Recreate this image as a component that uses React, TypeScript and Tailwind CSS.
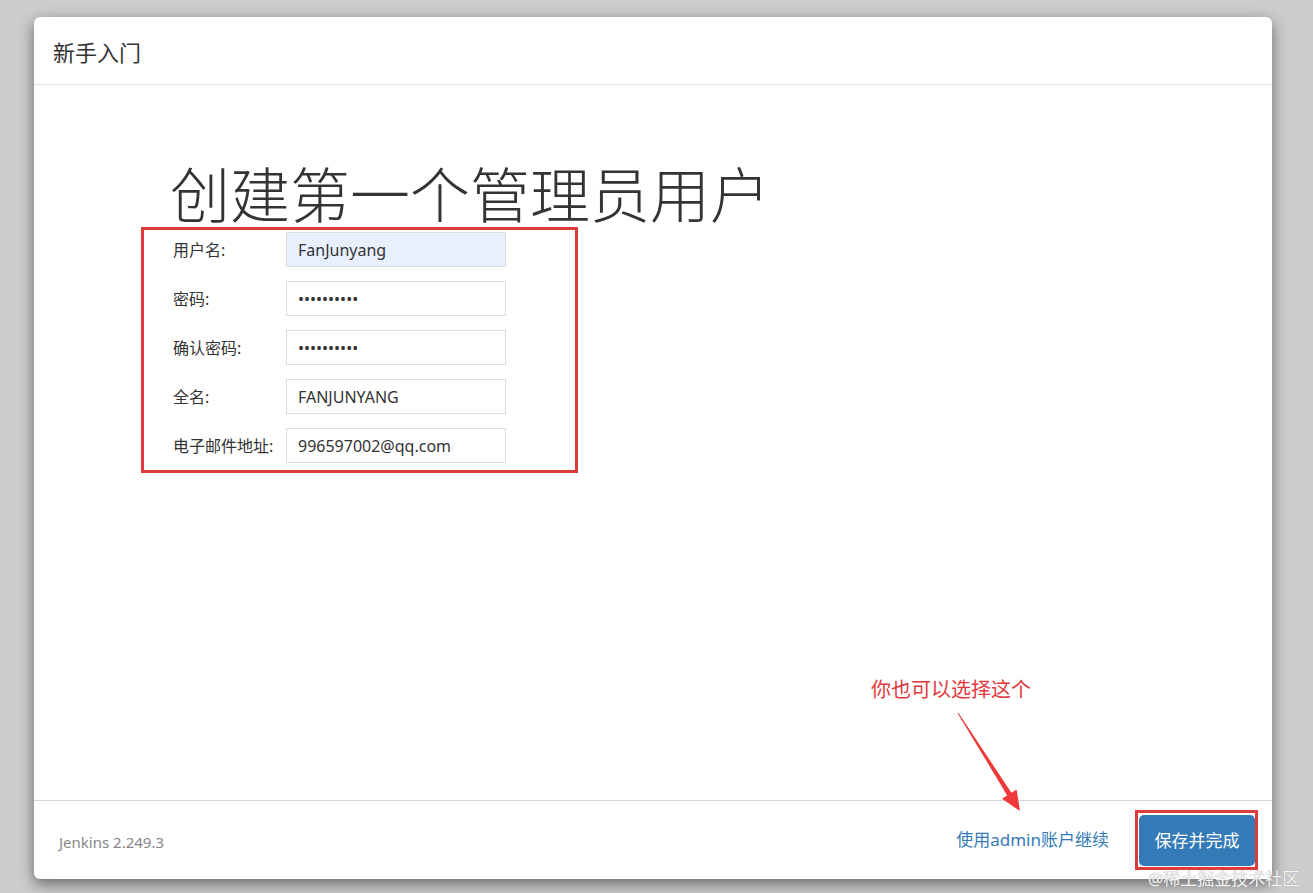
import React from 'react'

const font = '"Noto Sans", "Noto Sans CJK SC", sans-serif'

const fields = [
    { label: '用户名:', value: 'FanJunyang', type: 'text', filled: true },
    { label: '密码:', value: '••••••••••', type: 'password' },
    { label: '确认密码:', value: '••••••••••', type: 'password' },
    { label: '全名:', value: 'FANJUNYANG', type: 'text' },
    { label: '电子邮件地址:', value: '996597002@qq.com', type: 'text' },
]

function Arrow() {
    // red annotation arrow pointing to the admin link
    return (
        <svg className="absolute left-[900px] top-[620px]" width="100" height="112" viewBox="0 0 100 112">
            <polygon
                points="24.4,7.7 77.4,87.8 82.6,84.5 86,106 68,93.7 73.2,90.4 23.6,8.3"
                fill="#f03a3a"
            />
        </svg>
    )
}

export default function App() {
    return (
        <div className="relative min-h-[893px] bg-[#cdcdcd] pt-[17px] pl-[34px] pr-[41px] pb-[14px]" style={{ fontFamily: font }}>
            <div className="flex h-[862px] flex-col rounded-[6px] bg-white shadow-[0_5px_15px_rgba(0,0,0,0.5)]">
                <div className="flex h-[68px] items-center border-b border-[#e5e5e5] pl-[19px] pt-[4px]">
                    <h4 className="text-[22px] text-[#333]">新手入门</h4>
                </div>

                <div className="relative flex-1 pl-[107px] pt-[74px]">
                    <h1 className="pl-[29px] text-[60px] leading-[72px] font-light text-[#333]">创建第一个管理员用户</h1>
                    <div className="-mt-[4px] flex w-[437px] flex-col gap-[14px] border-[3px] border-[#dc3c3c] pl-[29px] pt-[2px] pb-[7px]">
                        {fields.map((f) => (
                            <div key={f.label} className="flex items-center">
                                <label className="w-[113px] text-[16px] text-[#333]">{f.label}</label>
                                <input
                                    readOnly
                                    value={f.value}
                                    className={`h-[35px] w-[220px] border border-[#ddd] px-[11px] text-[16px] text-[#333] outline-none ${f.filled ? 'bg-[#e8f0fe]' : 'bg-white'}`}
                                    style={{ fontFamily: font }}
                                />
                            </div>
                        ))}
                    </div>

                    <div className="absolute left-[837px] top-[590px] text-[20px] text-[#e0393e]">你也可以选择这个</div>
                    <Arrow />
                </div>

                <div className="flex h-[79px] items-center justify-between border-t border-[#d5d5d5] pl-[25px] pr-[14px]">
                    <span className="pt-[5px] text-[15px] text-[#888]">Jenkins 2.249.3</span>
                    <div className="flex items-center gap-[26px]">
                        <a className="text-[17px] text-[#337ab7]">使用admin账户继续</a>
                        <div className="border-[3px] border-[#dc3c3c] pl-[1px] pt-[2px] pb-[1px]">
                            <button className="h-[51px] w-[116px] rounded-[5px] bg-[#337ab7] text-[17px] text-white">保存并完成</button>
                        </div>
                    </div>
                </div>
            </div>

            <div className="absolute left-[1148px] top-[866px] text-[17px] text-[#f4f4f4] [text-shadow:0_0_1px_#888]">@稀土掘金技术社区</div>
        </div>
    )
}
